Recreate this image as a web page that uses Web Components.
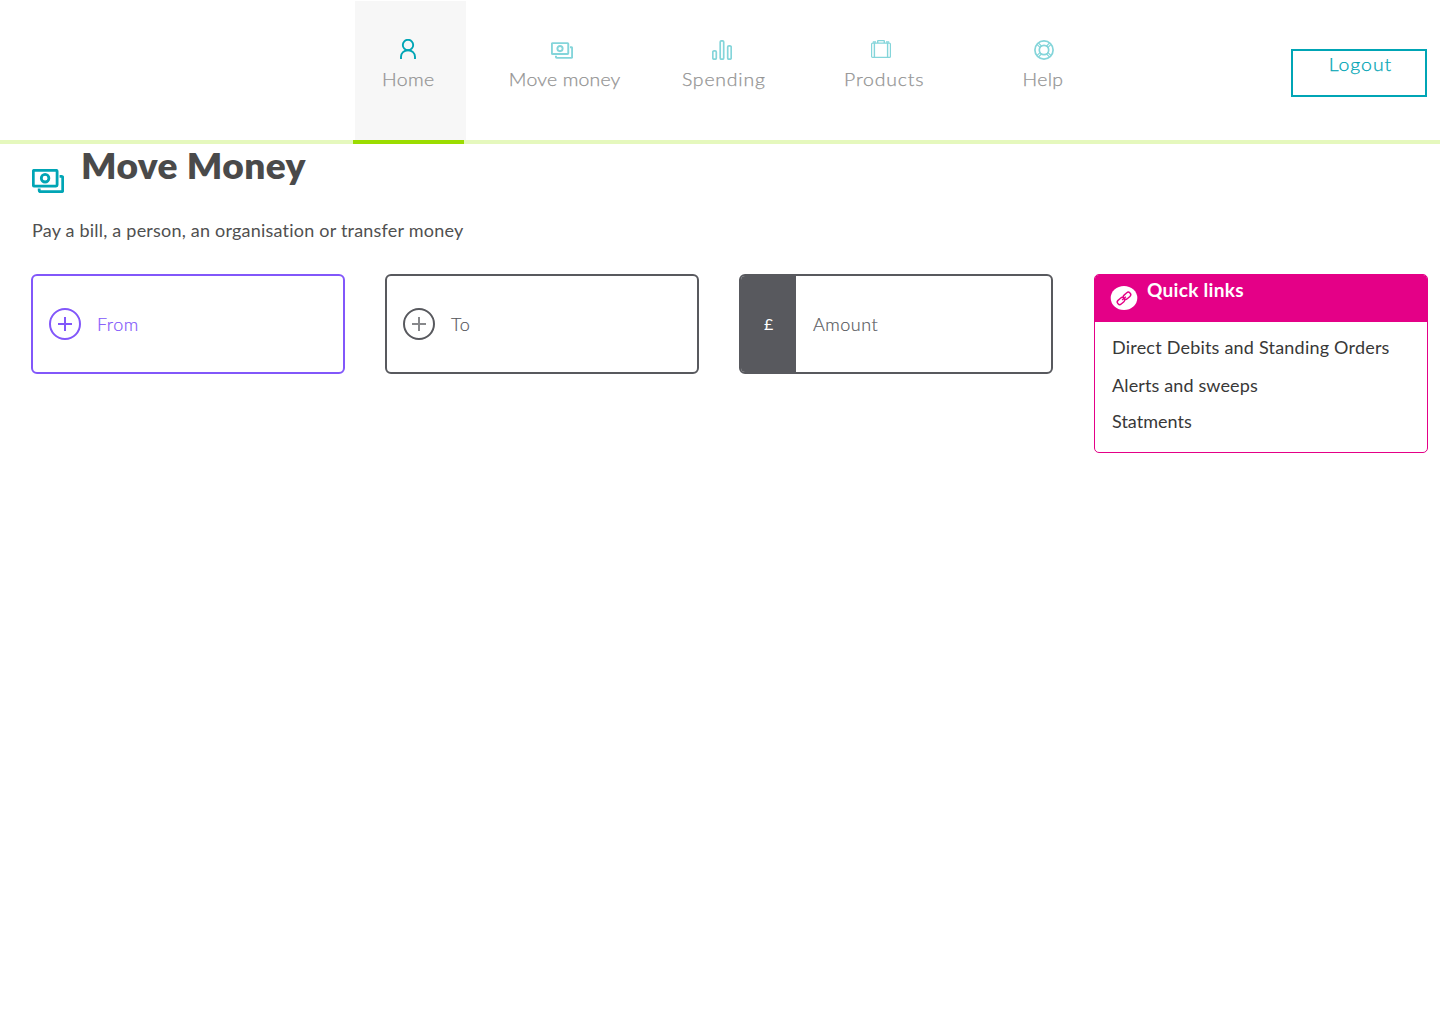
<!DOCTYPE html>
<html lang="en">
<head>
<meta charset="utf-8">
<title>Move Money</title>
<style>
html,body{margin:0;padding:0;background:#fff}
body{width:1440px;height:1024px;overflow:hidden}
</style>
</head>
<body>
<bank-page></bank-page>
<script>
const ICONS = {
  home: `<svg width="16" height="20" viewBox="0 0 16 20" fill="none" stroke="currentColor" stroke-width="1.900"><circle cx="8" cy="6" r="5.200"/><path d="M1 20v-2.200C1 14 4 11.200 8 11.200s7 2.800 7 6.600V20"/></svg>`,
  money: `<svg viewBox="0 0 32 24" fill="none" stroke="currentColor" stroke-width="2.800"><rect x="1.300" y="1.300" width="23.800" height="15.800" rx="1"/><circle cx="13.100" cy="9.200" r="3.800"/><path d="M27.600 7.300h2a1.100 1.100 0 0 1 1.100 1.100v13.200a1.100 1.100 0 0 1-1.100 1.100H8.300a1.100 1.100 0 0 1-1.100-1.100v-2"/></svg>`,
  bars: `<svg width="20" height="20" viewBox="0 0 20 20" fill="none" stroke="currentColor" stroke-width="1.700"><rect x=".8" y="10.800" width="3.500" height="8.400" rx="1.300"/><rect x="8.200" y=".8" width="3.500" height="18.400" rx="1.300"/><rect x="15.700" y="5.800" width="3.500" height="13.400" rx="1.300"/></svg>`,
  case: `<svg width="20" height="18" viewBox="0 0 20 18" fill="none" stroke="currentColor"><rect x=".6" y="3.100" width="18.800" height="14.300" rx="1" stroke-width="1.200"/><path d="M3.400 3v14M16.600 3v14" stroke-width="1.400"/><path d="M6.700 3V1.200q0-.6.6-.6h5.400q.6 0 .6.600V3M1.800 2h3.200M15 2h3.200" stroke-width="1.400"/></svg>`,
  help: `<svg width="20" height="20" viewBox="0 0 20 20" fill="none" stroke="currentColor" stroke-width="1.700"><circle cx="10" cy="10" r="9.100"/><circle cx="10" cy="10" r="4.700"/><path d="M3.200 4.600l3.300 3.300M4.600 3.200l3.300 3.300M16.800 4.600l-3.300 3.300M15.400 3.200l-3.300 3.300M3.200 15.400l3.300-3.300M4.600 16.800l3.300-3.300M16.800 15.400l-3.300-3.300M15.400 16.800l-3.300-3.300" stroke-width="1.200"/></svg>`,
  plus: `<svg width="32" height="32" viewBox="0 0 32 32" fill="none" stroke="currentColor" stroke-width="2"><circle cx="16" cy="16" r="15"/><path d="M9 16h14M16 9v14" stroke="var(--plus,currentColor)"/></svg>`,
  link: `<svg width="28" height="24" viewBox="0 0 28 24"><ellipse cx="14" cy="12" rx="13.300" ry="12" fill="#fff"/><g fill="none" stroke="#e40087" stroke-width="1.400" transform="rotate(-41 14 12.400)"><rect x="6" y="10" width="8" height="4.800" rx="2.200"/><rect x="14" y="10" width="8" height="4.800" rx="2.200"/><path d="M11.500 12.400h5"/></g></svg>`
};
class Base extends HTMLElement {
  constructor() { super(); this.attachShadow({ mode: 'open' }); }
  connectedCallback() { this.shadowRoot.innerHTML = this.view(); }
  attr(n, d = '') { return this.getAttribute(n) ?? d; }
}
customElements.define('app-icon', class extends Base {
  view() { return `<style>:host{display:block;flex:none}svg{display:block}</style>${ICONS[this.attr('name')]}`; }
  connectedCallback() {
    super.connectedCallback();
    if (this.hasAttribute('width')) {
      const s = this.shadowRoot.querySelector('svg');
      s.setAttribute('width', this.attr('width'));
      s.setAttribute('height', this.attr('height'));
    }
  }
});
customElements.define('nav-item', class extends Base {
  view() { return `<style>
    :host{display:flex;flex-direction:column;align-items:center;height:139px;margin-top:1px;box-sizing:border-box;padding-top:38px;font:300 18px/22px Lato,sans-serif;color:#949494;white-space:nowrap}
    :host([active]){background:#f7f7f7;padding-right:4px}
    .i{height:21px;display:flex;align-items:flex-end;color:#84d5da;margin-bottom:8px}
    :host([active]) .i{color:#00a5b5}
    span{display:block;transform:scaleX(1.08);-webkit-text-stroke:.25px currentColor}
    </style><div class="i"><slot name="icon"></slot></div><span><slot></slot></span>`; }
});
customElements.define('bank-header', class extends Base {
  view() { return `<style>
    :host{display:block;height:144px}
    .row{height:140px;display:grid;grid-template-columns:355px 111px 197px 122px 198px 120px 188px 136px;}
    .btn{grid-column:8;margin-top:49px;height:48px;box-sizing:border-box;border:2px solid #00a5b5;color:#00a5b5;font:300 18px/22px Lato,sans-serif;letter-spacing:.9px;text-align:center;padding:2px 0 0 3px;background:#fff}
    .btn span{display:inline-block;transform:scaleX(1.08);-webkit-text-stroke:.25px currentColor}
    .line{height:4px;background:#e5f8bd;padding-left:353px}.line i{display:block;width:111px;height:4px;background:#9bdc00}
    </style><div class="row"><span></span>
    <nav-item active style="letter-spacing:.3px"><app-icon slot="icon" name="home" style="margin:0 1px 1px 0"></app-icon>Home</nav-item>
    <nav-item style="letter-spacing:.18px"><app-icon slot="icon" name="money" width="22" height="17" style="margin:0 5px 1px 0"></app-icon>Move money</nav-item>
    <nav-item style="letter-spacing:.75px"><app-icon slot="icon" name="bars" style="margin-right:4px"></app-icon>Spending</nav-item>
    <nav-item style="letter-spacing:.78px"><app-icon slot="icon" name="case" style="margin:0 6px 2px 0"></app-icon>Products</nav-item>
    <nav-item style="letter-spacing:.3px"><app-icon slot="icon" name="help" style="margin-left:2px"></app-icon>Help</nav-item>
    <div class="btn"><span>Logout</span></div></div>
    <div class="line"><i></i></div>`; }
});
customElements.define('page-title', class extends Base {
  view() { return `<style>
    :host{display:block;height:130px;box-sizing:border-box;padding-left:32px}
    .t{display:flex;height:75px}
    app-icon{margin-top:25px;color:#00a5b5}
    h1{margin:-1px 0 0 17px;font:800 35px/44px Lato,sans-serif;color:#4a4a4a;letter-spacing:.38px;transform:scaleX(1.06);transform-origin:0 0}
    p{margin:0;font:400 18px/22px Lato,sans-serif;font-variant-ligatures:none;color:#505050;letter-spacing:.21px}
    </style><div class="t"><app-icon name="money" width="32" height="24"></app-icon><h1>Move Money</h1></div>
    <p><slot></slot></p>`; }
});
customElements.define('field-card', class extends Base {
  view() { return `<style>
    :host{display:flex;align-items:center;box-sizing:border-box;width:314px;height:100px;border:2px solid var(--c,#58595e);border-radius:6px;color:var(--c,#58595e);font:300 18px/22px Lato,sans-serif;overflow:hidden}
    app-icon{margin:0 16px}
    .p{display:flex;align-items:center;justify-content:center;width:55px;height:96px;background:#58595e;color:#fff;font-weight:400;font-size:16px;box-sizing:border-box;margin-right:17px;padding-bottom:1px}
    .l{padding-bottom:1px;-webkit-text-stroke:.2px currentColor}
    </style>${this.hasAttribute('prefix') ? `<span class="p"><span style="padding-left:1px">${this.attr('prefix')}</span></span>` : '<app-icon name="plus"></app-icon>'}<span class="l"><slot></slot></span>`; }
});
customElements.define('quick-links', class extends Base {
  view() { return `<style>
    :host{display:block;box-sizing:border-box;width:334px;height:179px;border:1px solid #e40087;border-radius:5px;overflow:hidden;background:#fff}
    header{display:flex;height:47px;background:#e40087;color:#fff;padding-left:15px;font:700 18px/22px Lato,sans-serif}
    header app-icon{margin-top:11px}
    header b{font-weight:inherit;margin:4px 0 0 9px;letter-spacing:.25px;transform:scaleX(1.06);transform-origin:0 0}
    ul{list-style:none;margin:0;padding:14px 0 0 17px;font:400 18px/22px Lato,sans-serif;color:#333;display:flex;flex-direction:column}
    </style><header><app-icon name="link"></app-icon><b>Quick links</b></header><ul><slot></slot></ul>`; }
});
customElements.define('quick-link', class extends Base {
  view() { return `<style>:host{display:block;height:22px;margin-bottom:15px;white-space:nowrap;color:#383838}</style><slot></slot>`; }
});
customElements.define('bank-page', class extends Base {
  view() { return `<style>:host{display:block}.cards{display:flex;align-items:flex-start;gap:40px;padding-left:31px}
    quick-links{margin-left:1px}</style>
    <bank-header></bank-header>
    <page-title>Pay a bill, a person, an organisation or transfer money</page-title>
    <div class="cards">
      <field-card style="--c:#8257fa;letter-spacing:.5px">From</field-card>
      <field-card style="--plus:#87888b;letter-spacing:.5px">To</field-card>
      <field-card prefix="£" style="letter-spacing:.5px">Amount</field-card>
      <quick-links>
        <quick-link style="letter-spacing:.21px">Direct Debits and Standing Orders</quick-link>
        <quick-link style="letter-spacing:.13px;padding-top:1px;height:21px">Alerts and sweeps</quick-link>
        <quick-link style="letter-spacing:.03px">Statments</quick-link>
      </quick-links>
    </div>`; }
});
</script>
</body>
</html>
